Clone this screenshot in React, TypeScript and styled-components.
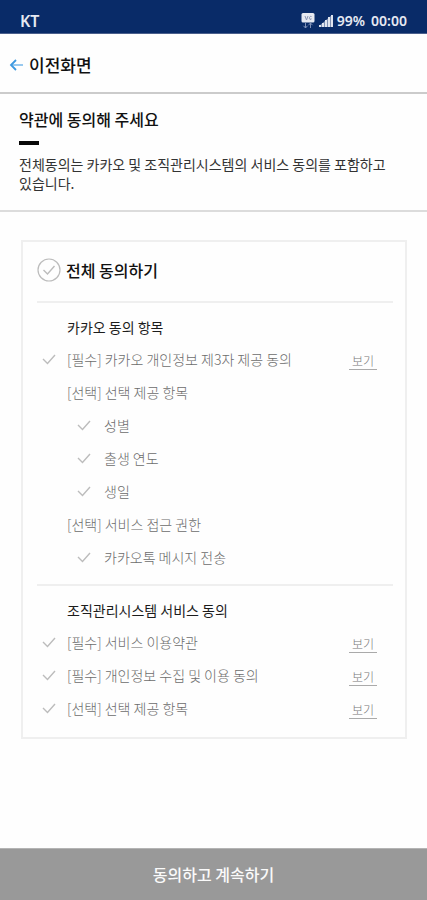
import React from "react";
import styled, { createGlobalStyle } from "styled-components";

const GlobalStyle = createGlobalStyle`
  * { box-sizing: border-box; }
  body {
    margin: 0;
    background: #fefefe;
    color: #111;
    font-family: "Noto Sans CJK KR", "Noto Sans", sans-serif;
  }
  h1, h2, h3, p, ul { margin: 0; padding: 0; }
  button { font-family: inherit; cursor: pointer; }
`;

const Screen = styled.div`
  display: flex;
  flex-direction: column;
  min-height: 100vh;
`;

const StatusBar = styled.div`
  display: flex;
  align-items: flex-end;
  justify-content: space-between;
  height: 34px;
  padding: 0 20px 2px;
  background: #092b68;
  border-bottom: 1px solid #4b5f8c;
  color: #e6e9f2;
  font: 600 14px/20px "Noto Sans", sans-serif;
`;

const Carrier = styled.span`
  font-size: 16px;
`;

const StatusItems = styled.div`
  display: flex;
  align-items: center;
  gap: 4px;
`;

const Clock = styled.span`
  margin-left: 2px;
`;

const Header = styled.header`
  display: flex;
  align-items: center;
  height: 60px;
  padding: 4px 8px 0;
  border-bottom: 2px solid #cbcbcb;
`;

const BackButton = styled.button`
  display: flex;
  align-items: center;
  gap: 5px;
  padding: 0;
  border: 0;
  background: none;
  color: #111;
  font-size: 17px;
  font-weight: 500;
  line-height: 24px;
`;

const Intro = styled.section`
  padding: 13px 19px 17px;
  border-bottom: 2px solid #dcdcdc;
`;

const IntroTitle = styled.h1`
  font-size: 16px;
  font-weight: 500;
  line-height: 24px;
`;

const Accent = styled.div`
  width: 20px;
  height: 4px;
  margin: 10px 0;
  background: #080808;
`;

const IntroText = styled.p`
  color: #333;
  font-size: 14px;
  line-height: 19px;
  word-break: keep-all;
`;

const Card = styled.main`
  margin: 28px 20px 0 21px;
  padding: 0 12px 13px 14px;
  border: 2px solid #efefef;
`;

const Section = styled.section`
  padding-top: 12px;
  padding-bottom: 11px;
  border-top: 2px solid #efefef;

  &:last-child { padding-bottom: 0; }
`;

const SectionTitle = styled.h2`
  margin-bottom: 3px;
  padding-left: 30px;
  color: #1c1c1c;
  font-size: 14px;
  font-weight: 400;
  line-height: 24px;
`;

const Row = styled.div<{ $nested?: boolean }>`
  display: flex;
  align-items: center;
  justify-content: space-between;
  height: 33px;
  padding-left: ${(p) => (p.$nested ? 40 : 5)}px;
  padding-right: 16px;
`;

const AllRow = styled.div`
  display: flex;
  align-items: center;
  height: 59px;
  padding-bottom: 3px;
`;

const GroupTitle = styled.h3`
  padding-left: 25px;
  color: #6c6c6c;
  font-size: 14px;
  font-weight: 300;
  line-height: 24px;
`;

const CheckLabel = styled.label<{ $gap: number; $main?: boolean }>`
  display: flex;
  align-items: center;
  gap: ${(p) => p.$gap}px;
  color: ${(p) => (p.$main ? "#111" : "#6c6c6c")};
  font-size: ${(p) => (p.$main ? 16 : 14)}px;
  font-weight: ${(p) => (p.$main ? 500 : 300)};
  line-height: 24px;
  cursor: pointer;
`;

const CheckBox = styled.span<{ $size: number }>`
  display: grid;
  width: ${(p) => p.$size}px;
  height: ${(p) => p.$size}px;
  color: #bcbcbc;

  > * { grid-area: 1 / 1; width: 100%; height: 100%; }
  input { appearance: none; margin: 0; cursor: pointer; }
  svg { pointer-events: none; }
  input:checked + svg { color: #1d7fd6; }
`;

const ViewButton = styled.button`
  width: 28px;
  margin-top: 5px;
  padding: 0;
  border: 0;
  border-bottom: 1px solid #aaa;
  background: none;
  color: #777;
  font-size: 12px;
  font-weight: 300;
  line-height: 16px;
  text-align: center;
`;

const Submit = styled.button`
  height: 52px;
  margin-top: auto;
  padding: 0 0 2px;
  border: 0;
  border-top: 1px solid #b4b4b4;
  background: #999;
  color: #fafafa;
  font-size: 16px;
  font-weight: 500;
  line-height: 24px;
`;

function AgreeAll() {
  return (
    <CheckLabel $gap={5} $main>
      <CheckBox $size={24}>
        <input type="checkbox" />
        <svg viewBox="0 0 24 24" fill="none" stroke="currentColor">
          <circle cx="12" cy="12" r="11" strokeWidth="1.2" />
          <path d="M6.5 12 L10.5 16 L17.5 8" strokeWidth="1.4" />
        </svg>
      </CheckBox>
      전체 동의하기
    </CheckLabel>
  );
}

function Agreement({ text, nested, view }: { text: string; nested?: boolean; view?: boolean }) {
  return (
    <Row $nested={nested}>
      <CheckLabel $gap={nested ? 13 : 11}>
        <CheckBox $size={14}>
          <input type="checkbox" />
          <svg viewBox="0 0 14 14" fill="none" stroke="currentColor">
            <path d="M1 7 L5.5 11.5 L13 3" strokeWidth="1.4" />
          </svg>
        </CheckBox>
        {text}
      </CheckLabel>
      {view && <ViewButton type="button" aria-label={`${text} 보기`}>보기</ViewButton>}
    </Row>
  );
}

function Group({ text }: { text: string }) {
  return (
    <Row>
      <GroupTitle>{text}</GroupTitle>
    </Row>
  );
}

export default function App() {
  return (
    <Screen>
      <GlobalStyle />
      <StatusBar>
        <Carrier>KT</Carrier>
        <StatusItems>
          <svg width="14" height="16" viewBox="0 0 14 16" fill="none">
            <rect x="0.5" y="0" width="13" height="9.5" rx="1.5" fill="#e6e9f2" />
            <path d="M4 3 L5.5 7 L7 3 M10.5 3.5 C8 2.5 7.5 7 10 6.5 V5.2" stroke="#8793b3" />
            <path d="M4.5 10 V15 M2.5 12.8 L4.5 15 L6.5 12.8 M9.5 15 V10 M7.5 12.2 L9.5 10 L11.5 12.2" stroke="#7f91b8" />
          </svg>
          <svg width="14" height="14" viewBox="0 0 14 14" fill="#e0e4ee">
            <path d="M0 11h2v2H0z M3 9h2v4H3z M6 6h2v7H6z M9 3h2v10H9z M12 1h2v12h-2z" />
            <path d="M0 12 L13 1 V13 H0z" opacity=".55" />
          </svg>
          <span>99%</span>
          <Clock>00:00</Clock>
        </StatusItems>
      </StatusBar>
      <Header>
        <BackButton type="button">
          <svg width="16" height="16" viewBox="0 0 16 16" fill="none">
            <path d="M3 8 H15" stroke="#7fbcec" strokeWidth="1.6" />
            <path d="M8 3 L3 8 L8 13" stroke="#3c98e0" strokeWidth="1.8" />
          </svg>
          이전화면
        </BackButton>
      </Header>
      <Intro>
        <IntroTitle>약관에 동의해 주세요</IntroTitle>
        <Accent />
        <IntroText>
          전체동의는 카카오 및 조직관리시스템의 서비스 동의를 포함하고 있습니다.
        </IntroText>
      </Intro>
      <Card>
        <AllRow>
          <AgreeAll />
        </AllRow>
        <Section>
          <SectionTitle>카카오 동의 항목</SectionTitle>
          <Agreement text="[필수] 카카오 개인정보 제3자 제공 동의" view />
          <Group text="[선택] 선택 제공 항목" />
          <Agreement text="성별" nested />
          <Agreement text="출생 연도" nested />
          <Agreement text="생일" nested />
          <Group text="[선택] 서비스 접근 권한" />
          <Agreement text="카카오톡 메시지 전송" nested />
        </Section>
        <Section>
          <SectionTitle>조직관리시스템 서비스 동의</SectionTitle>
          <Agreement text="[필수] 서비스 이용약관" view />
          <Agreement text="[필수] 개인정보 수집 및 이용 동의" view />
          <Agreement text="[선택] 선택 제공 항목" view />
        </Section>
      </Card>
      <Submit type="button">동의하고 계속하기</Submit>
    </Screen>
  );
}
